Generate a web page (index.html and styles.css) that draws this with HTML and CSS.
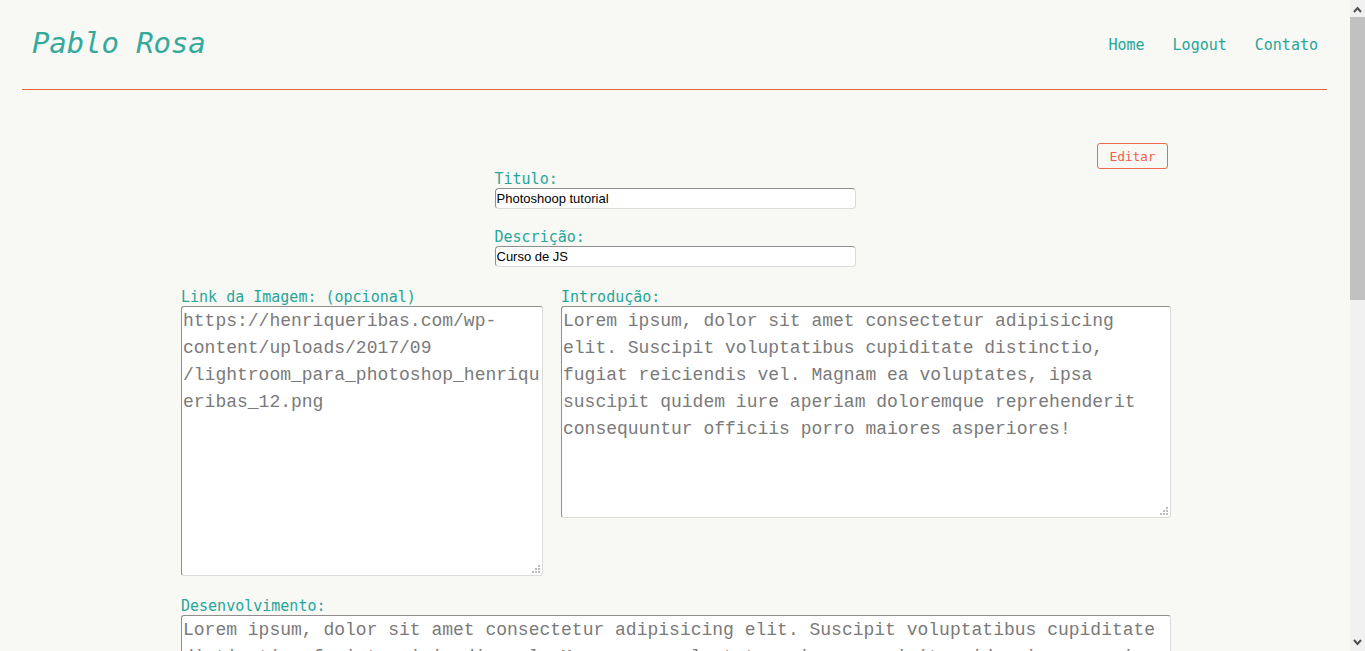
FILE: index.html
```html
<!DOCTYPE html>
<html lang="pt-BR">
<head>
<meta charset="utf-8">
<title>Pablo Rosa</title>
<link rel="stylesheet" href="styles.css">
</head>
<body>
<header class="site-header">
  <h1 class="brand">Pablo Rosa</h1>
  <nav class="nav">
    <a href="#" class="nav-link">Home</a>
    <a href="#" class="nav-link">Logout</a>
    <a href="#" class="nav-link">Contato</a>
  </nav>
</header>
<main class="content">
  <div class="actions">
    <button class="btn-edit" type="button">Editar</button>
  </div>
  <div class="meta">
    <label class="field">
      <span class="label">Titulo:</span>
      <input class="input" type="text" value="Photoshoop tutorial">
    </label>
    <label class="field">
      <span class="label">Descrição:</span>
      <input class="input" type="text" value="Curso de JS">
    </label>
  </div>
  <div class="row">
    <label class="field col-link">
      <span class="label">Link da Imagem: (opcional)</span>
      <textarea class="area area-link">https://henriqueribas.com/wp-
content/uploads/2017/09
/lightroom_para_photoshop_henriqueribas_12.png</textarea>
    </label>
    <label class="field col-intro">
      <span class="label">Introdução:</span>
      <textarea class="area area-intro">Lorem ipsum, dolor sit amet consectetur adipisicing elit. Suscipit voluptatibus cupiditate distinctio, fugiat reiciendis vel. Magnam ea voluptates, ipsa suscipit quidem iure aperiam doloremque reprehenderit consequuntur officiis porro maiores asperiores!</textarea>
    </label>
  </div>
  <label class="field field-dev">
    <span class="label">Desenvolvimento:</span>
    <textarea class="area area-dev">Lorem ipsum, dolor sit amet consectetur adipisicing elit. Suscipit voluptatibus cupiditate distinctio, fugiat reiciendis vel. Magnam ea voluptates, ipsa suscipit quidem iure aperiam doloremque reprehenderit consequuntur officiis porro maiores asperiores!</textarea>
  </label>
</main>
<div class="scrollbar" aria-hidden="true">
  <div class="sb-btn">
    <svg width="15" height="17" viewBox="0 0 15 17"><path d="M4 12 L7.5 8 L11 12" fill="none" stroke="#505050" stroke-width="2"/></svg>
  </div>
  <div class="sb-track">
    <div class="sb-thumb"></div>
  </div>
  <div class="sb-btn">
    <svg width="15" height="17" viewBox="0 0 15 17"><path d="M4 6 L7.5 10 L11 6" fill="none" stroke="#505050" stroke-width="2"/></svg>
  </div>
</div>
</body>
</html>
```
FILE: styles.css
```css
html {
  overflow-x: hidden;
  background: #f8f8f4;
}
html, body {
  margin: 0;
  padding: 0;
}
body {
  width: 1350px;
  background: #f8f8f4;
  font-family: "DejaVu Sans Mono", "Liberation Mono", monospace;
  color: #26a69a;
}
.site-header {
  margin: 0 23px 0 22px;
  height: 89px;
  border-bottom: 1px solid #e8603c;
  display: flex;
  align-items: center;
  justify-content: space-between;
  padding: 0 9px 0 10px;
}
.brand {
  margin: 0;
  font-size: 29px;
  font-weight: normal;
  font-style: italic;
  color: #35a99c;
  letter-spacing: -0.1px;
  position: relative;
  top: -2px;
}
.nav {
  display: flex;
  gap: 28px;
}
.nav-link {
  color: #26a69a;
  text-decoration: none;
  font-size: 15px;
}
.content {
  width: 990px;
  margin: 0 auto;
  padding: 53px 0 120px;
  display: flex;
  flex-direction: column;
  position: relative;
  left: 1px;
}
.actions {
  display: flex;
  justify-content: flex-end;
  padding-right: 3px;
}
.btn-edit {
  font-family: "DejaVu Sans Mono", "Liberation Mono", monospace;
  font-size: 13px;
  color: #f0604a;
  background: transparent;
  border: 1px solid #ee6a50;
  border-radius: 3px;
  width: 71px;
  height: 26px;
  padding: 0;
  letter-spacing: -0.2px;
}
.meta {
  width: 361px;
  margin: 2px auto 0;
  display: flex;
  flex-direction: column;
  gap: 20px;
  position: relative;
  left: -1px;
}
.field {
  display: flex;
  flex-direction: column;
}
.label {
  font-size: 15px;
  line-height: 17px;
  color: #26a69a;
}
.input {
  box-sizing: border-box;
  width: 361px;
  height: 21px;
  margin: 0;
  padding: 0 1px;
  font-family: "Liberation Sans", Arial, sans-serif;
  font-size: 13px;
  color: #000;
  background: #fff;
  border: 1px solid;
  border-color: #8f8f8f #dcdcdc #dcdcdc #8f8f8f;
  border-radius: 4px;
  outline: none;
}
.row {
  display: flex;
  gap: 18px;
  margin-top: 22px;
  align-items: flex-start;
}
.col-link {
  width: 362px;
}
.col-intro {
  width: 610px;
}
.area {
  box-sizing: border-box;
  margin: 0;
  padding: 1px;
  font-family: "Liberation Mono", "Courier New", monospace;
  font-size: 18px;
  line-height: 27px;
  color: #7a7a7a;
  border: 1px solid;
  border-color: #8f8f8f #dcdcdc #dcdcdc #8f8f8f;
  border-radius: 3px;
  outline: none;
  resize: none;
  background-color: #fff;
  background-image:
    linear-gradient(#bdbdbd, #bdbdbd),
    linear-gradient(#bdbdbd, #bdbdbd),
    linear-gradient(#bdbdbd, #bdbdbd),
    linear-gradient(#bdbdbd, #bdbdbd),
    linear-gradient(#bdbdbd, #bdbdbd),
    linear-gradient(#bdbdbd, #bdbdbd);
  background-size: 2px 2px;
  background-repeat: no-repeat;
  background-position:
    right 2px bottom 2px,
    right 5px bottom 2px,
    right 8px bottom 2px,
    right 2px bottom 5px,
    right 5px bottom 5px,
    right 2px bottom 8px;
}
.area-link {
  width: 362px;
  height: 270px;
}
.area-intro {
  width: 610px;
  height: 212px;
}
.field-dev {
  margin-top: 22px;
}
.area-dev {
  width: 990px;
  height: 700px;
}
.scrollbar {
  position: fixed;
  top: 0;
  right: 0;
  width: 15px;
  height: 100vh;
  background: #f1f1f1;
  display: flex;
  flex-direction: column;
}
.sb-btn {
  height: 17px;
  flex: none;
  display: flex;
}
.sb-track {
  flex: 1;
}
.sb-thumb {
  height: 283px;
  background: #c1c1c1;
}
```
